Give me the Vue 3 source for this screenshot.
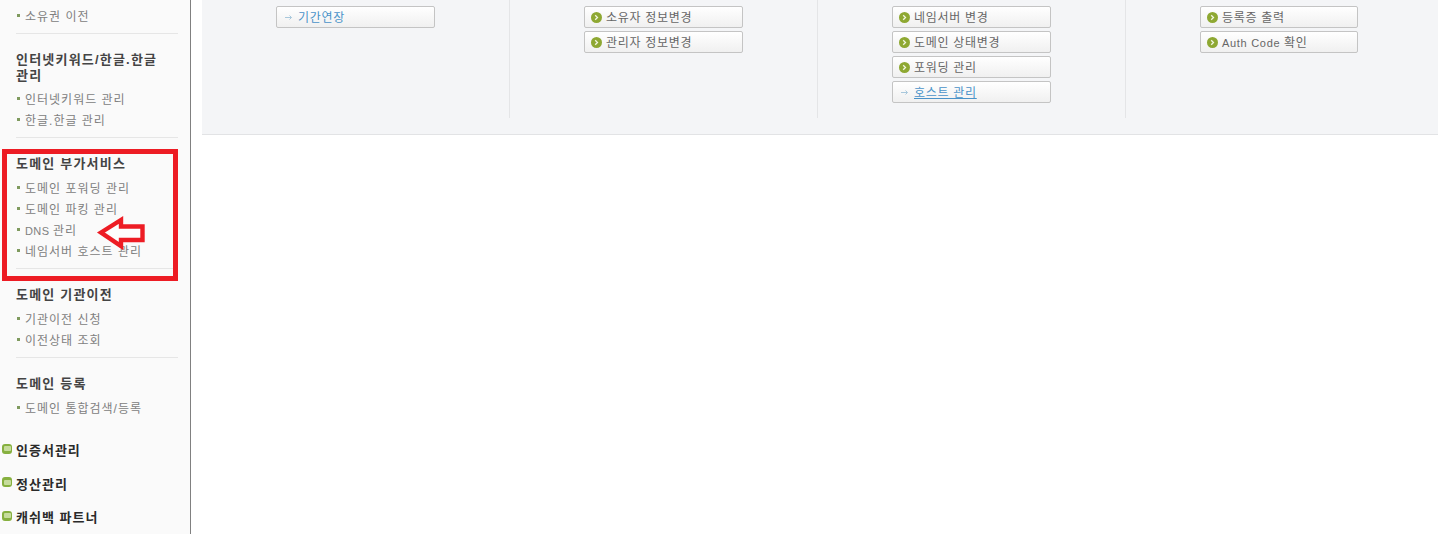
<script setup>
const sections = [
  { items: ['소유권 이전'], lead: true },
  { title: '인터넷키워드/한글.한글 관리', tight: true, items: ['인터넷키워드 관리', '한글.한글 관리'] },
  { title: '도메인 부가서비스', items: ['도메인 포워딩 관리', '도메인 파킹 관리', 'DNS 관리', '네임서버 호스트 관리'] },
  { title: '도메인 기관이전', items: ['기관이전 신청', '이전상태 조회'] },
  { title: '도메인 등록', items: ['도메인 통합검색/등록'], last: true }
]
const categories = ['인증서관리', '정산관리', '캐쉬백 파트너']
const columns = [
  [{ label: '기간연장', link: true }],
  [{ label: '소유자 정보변경' }, { label: '관리자 정보변경' }],
  [{ label: '네임서버 변경' }, { label: '도메인 상태변경' }, { label: '포워딩 관리' }, { label: '호스트 관리', link: true, underline: true }],
  [{ label: '등록증 출력' }, { label: 'Auth Code 확인' }]
]
const latinHead = (text) => (text.match(/^[A-Za-z ]+/) || [''])[0]
const rest = (text) => text.slice(latinHead(text).length)
</script>

<template>
  <div class="page">
    <aside class="sidebar">
      <section
        v-for="(s, i) in sections"
        :key="i"
        class="section"
        :class="{ lead: s.lead, last: s.last }"
      >
        <h3 v-if="s.title" class="heading" :class="{ tight: s.tight }">{{ s.title }}</h3>
        <ul class="items">
          <li v-for="item in s.items" :key="item" class="item"><span class="latin item-latin">{{ latinHead(item) }}</span>{{ rest(item) }}</li>
        </ul>
      </section>
      <div class="categories">
        <div v-for="c in categories" :key="c" class="category">
          <span class="minus"></span>
          <span class="category-text">{{ c }}</span>
        </div>
      </div>
    </aside>

    <main class="main">
      <div class="panel">
        <div v-for="(col, i) in columns" :key="i" class="col">
          <a
            v-for="b in col"
            :key="b.label"
            class="btn"
            :class="{ link: b.link, under: b.underline }"
          >
            <svg v-if="b.link" class="ico" viewBox="0 0 11 11">
              <path d="M2 5.5H8.5M6.5 3.5L8.5 5.5L6.5 7.5" fill="none" stroke="#a9c8dc" stroke-width="1" />
            </svg>
            <svg v-else class="ico" viewBox="0 0 11 11">
              <circle cx="5.5" cy="5.5" r="5.5" fill="#8ea832" />
              <path d="M4.2 3.2L6.5 5.5L4.2 7.8" fill="none" stroke="#f2f6e2" stroke-width="1.3" />
            </svg>
            <span class="label"><span class="latin">{{ latinHead(b.label) }}</span>{{ rest(b.label) }}</span>
          </a>
        </div>
      </div>
    </main>

    <div class="mark-box"></div>
    <svg class="mark-arrow" viewBox="0 0 50 36">
      <path
        d="M5 17.5L25 5V11.5H46.5V25H25V31Z"
        fill="#fdfdfd"
        stroke="#ed1c24"
        stroke-width="4.4"
        stroke-linejoin="miter"
      />
    </svg>
  </div>
</template>

<style scoped>
.page {
  position: relative;
  display: flex;
  width: 1438px;
  height: 534px;
  overflow: hidden;
  background: #fff;
  font-family: "Liberation Sans", "Noto Sans CJK KR", sans-serif;
  font-size: 12px;
}
.sidebar {
  flex: none;
  box-sizing: border-box;
  width: 191px;
  height: 534px;
  padding-right: 12px;
  background: #fafafa;
  border-right: 1px solid #808080;
}
.section {
  margin-left: 16px;
  padding: 18px 0 7px;
  border-bottom: 1px solid #e6e6e6;
}
.section.lead {
  padding-top: 5px;
}
.section.last {
  padding-bottom: 0;
  border-bottom: 0;
}
.heading {
  margin: 0 0 5px;
  font-size: 13px;
  font-weight: 700;
  line-height: 16px;
  letter-spacing: 1.2px;
  word-break: keep-all;
  color: #444;
}
.heading.tight {
  margin-bottom: 4px;
}
.items {
  margin: 0;
  padding: 0;
  list-style: none;
}
.item {
  position: relative;
  height: 21px;
  padding-left: 9px;
  line-height: 25px;
  letter-spacing: 1px;
  color: #808080;
  white-space: nowrap;
}
.item::before {
  content: "";
  position: absolute;
  left: 1px;
  top: 9px;
  width: 3px;
  height: 3px;
  background: #7f9a5e;
}
.latin {
  font-size: 11px;
}
.item-latin {
  letter-spacing: 0.4px;
}
.categories {
  padding: 14px 0 0 2px;
}
.category {
  display: flex;
  align-items: center;
  gap: 4px;
  height: 33.5px;
  font-size: 13px;
  font-weight: 700;
  letter-spacing: 1px;
  color: #2a2a2a;
}
.category-text {
  padding-top: 2px;
}
.minus {
  flex: none;
  display: flex;
  align-items: center;
  box-sizing: border-box;
  width: 10px;
  height: 10px;
  padding: 0 1.5px;
  border-radius: 3px;
  background: #86b03f;
}
.minus::before {
  content: "";
  width: 100%;
  height: 5px;
  border-radius: 1px;
  background: #c6dc9c;
}
.main {
  flex: 1;
  min-width: 0;
  padding-left: 11px;
}
.panel {
  display: grid;
  grid-template-columns: repeat(3, 308px) 307px;
  height: 134px;
  background: #f4f5f7;
  border-bottom: 1px solid #e2e3e5;
}
.col {
  display: flex;
  flex-direction: column;
  gap: 3px;
  box-sizing: border-box;
  height: 118px;
  padding: 6px 74px 0;
  border-right: 1px solid #e4e5e7;
}
.col:last-child {
  padding-right: 75px;
  border-right: 0;
}
.btn {
  display: flex;
  align-items: center;
  gap: 4px;
  box-sizing: border-box;
  height: 22px;
  padding-left: 6px;
  border: 1px solid #c4c4c4;
  border-radius: 2px;
  background: linear-gradient(#fff, #f0f0f0);
  letter-spacing: 0.7px;
  color: #666;
  white-space: nowrap;
}
.btn.link {
  color: #4a93c9;
}
.btn.under .label {
  text-decoration: underline;
}
.label {
  margin-top: -2px;
}
.ico {
  flex: none;
  width: 11px;
  height: 11px;
}
.mark-box {
  position: absolute;
  left: 2px;
  top: 149px;
  box-sizing: border-box;
  width: 176px;
  height: 132px;
  border: 5px solid #ed1c24;
}
.mark-arrow {
  position: absolute;
  left: 96px;
  top: 215px;
  width: 50px;
  height: 36px;
}
</style>

<style>
html, body { margin: 0; background: #fff; }
</style>
